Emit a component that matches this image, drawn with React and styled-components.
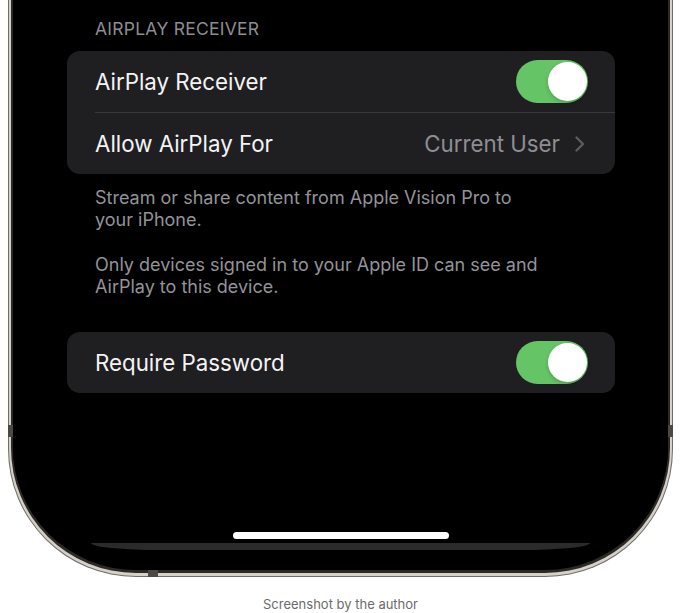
import React from 'react';
import styled, { createGlobalStyle } from 'styled-components';

const Global = createGlobalStyle`
  html, body { margin: 0; padding: 0; background: #fff; }
  body { font-family: Inter, "Noto Sans", sans-serif; -webkit-font-smoothing: antialiased; }
  * { box-sizing: border-box; }
`;

const Page = styled.div`
  width: 680px;
  height: 613px;
  overflow: hidden;
  background: #fff;
  display: flex;
  flex-direction: column;
`;

const FrameOuter = styled.div`
  position: relative;
  width: 665px;
  margin-left: 8px;
  background: #6f6d69;
  border-radius: 0 0 128px 128px;
  padding: 0 1px 1px;
`;

const FrameSilver = styled.div`
  background: #d5d1c9;
  border-radius: 0 0 127px 127px;
  padding: 0 2px 3px;
`;

const FrameDark = styled.div`
  background: #2b2a28;
  border-radius: 0 0 125px 125px;
  padding: 0 2px 3px;
`;

const Bezel = styled.div`
  background: #000;
  border-radius: 0 0 123px 123px;
  padding-bottom: 20px;
  overflow: hidden;
`;

const Band = styled.span`
  position: absolute;
  background: #4a4946;
  ${(p) => p.$side === 'left' && 'left: 0; top: 425px; width: 5px; height: 12px;'}
  ${(p) => p.$side === 'right' && 'right: 0; top: 425px; width: 5px; height: 12px;'}
  ${(p) => p.$side === 'bottom' && 'left: 140px; bottom: 0; width: 10px; height: 7px;'}
`;

const Screen = styled.div`
  height: 543px;
  background: #000;
  padding: 19px 53px 0 54px;
  display: flex;
  flex-direction: column;
`;

const ScreenEdge = styled.div`
  height: 7px;
  margin: 0 78px;
  background: #2b2b2c;
  border-bottom-left-radius: 70px 7px;
  border-bottom-right-radius: 70px 7px;
`;

const SectionHeader = styled.div`
  font-size: 17.5px;
  line-height: 20px;
  color: #8d8d92;
  padding-left: 28px;
  text-transform: uppercase;
  letter-spacing: 0.25px;
`;

const Card = styled.div`
  background: #1f1f21;
  border-radius: 13px;
  margin-top: ${(p) => p.$top}px;
  overflow: hidden;
`;

const Row = styled.div`
  height: 61px;
  display: flex;
  align-items: center;
  justify-content: space-between;
  padding: 0 27px 0 28px;
`;

const Divider = styled.div`
  height: 1px;
  margin-left: 28px;
  background: #38383a;
`;

const Label = styled.span`
  font-size: 22.3px;
  color: #f4f4f5;
`;

const Value = styled.span`
  display: flex;
  align-items: center;
  gap: 15px;
  font-size: 22.3px;
  color: #8e8e93;
  padding-right: 3px;
`;

const Track = styled.div`
  width: 72px;
  height: 43px;
  border-radius: 22px;
  background: #65c466;
  display: flex;
  align-items: center;
  justify-content: flex-end;
  padding: 0 1px;
`;

const Knob = styled.div`
  width: 39px;
  height: 39px;
  border-radius: 50%;
  background: #fff;
  box-shadow: 0 2px 4px rgba(0, 0, 0, 0.18);
`;

const Footer = styled.p`
  margin: ${(p) => p.$top}px 0 0;
  padding-left: 28px;
  font-size: 18px;
  line-height: 22px;
  color: #939398;
  max-width: 478px;
`;

const HomeIndicator = styled.div`
  margin: auto auto 4px;
  width: 216px;
  height: 7px;
  border-radius: 4px;
  background: #fff;
`;

const Caption = styled.div`
  margin-top: 19px;
  text-align: center;
  font-size: 13px;
  line-height: 16px;
  color: #6b6b6b;
  padding-left: 1px;
`;

const Toggle = () => (
  <Track>
    <Knob />
  </Track>
);

const Chevron = () => (
  <svg width="10" height="16" viewBox="0 0 10 16" fill="none">
    <polyline points="1.5,1.5 8,8 1.5,14.5" stroke="#5c5c60" strokeWidth="2.4" strokeLinecap="round" strokeLinejoin="round" />
  </svg>
);

export default function App() {
  return (
    <Page>
      <Global />
      <FrameOuter>
        <Band $side="left" />
        <Band $side="right" />
        <Band $side="bottom" />
        <FrameSilver>
          <FrameDark>
            <Bezel>
              <Screen>
                <SectionHeader>AirPlay Receiver</SectionHeader>
                <Card $top={12}>
                  <Row>
                    <Label>AirPlay Receiver</Label>
                    <Toggle />
                  </Row>
                  <Divider />
                  <Row>
                    <Label>Allow AirPlay For</Label>
                    <Value>
                      Current User
                      <Chevron />
                    </Value>
                  </Row>
                </Card>
                <Footer $top={13}>Stream or share content from Apple Vision Pro to your iPhone.</Footer>
                <Footer $top={23}>Only devices signed in to your Apple ID can see and AirPlay to this device.</Footer>
                <Card $top={34}>
                  <Row>
                    <Label>Require Password</Label>
                    <Toggle />
                  </Row>
                </Card>
                <HomeIndicator />
              </Screen>
              <ScreenEdge />
            </Bezel>
          </FrameDark>
        </FrameSilver>
      </FrameOuter>
      <Caption>Screenshot by the author</Caption>
    </Page>
  );
}
